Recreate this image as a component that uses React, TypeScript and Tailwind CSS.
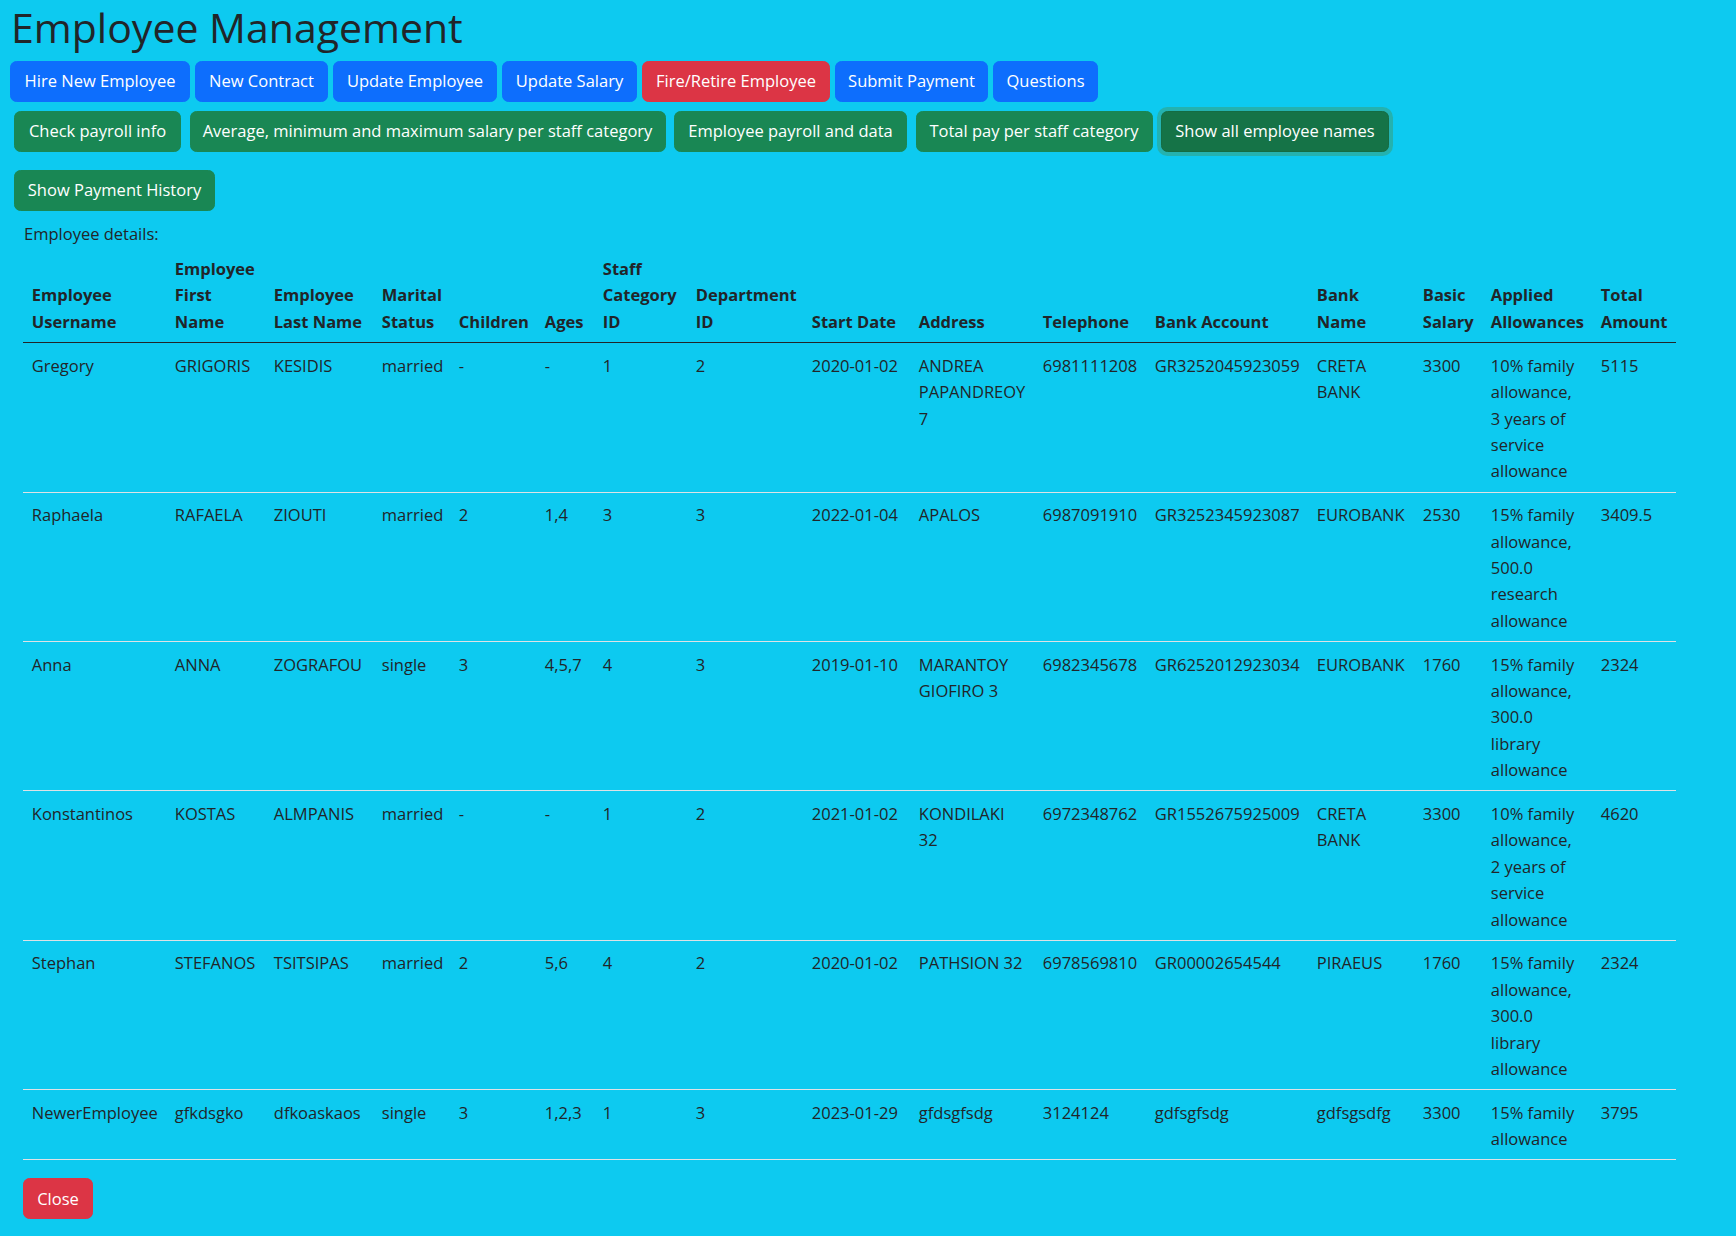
import React from "react";

type Row = {
  u: string;
  f: string;
  l: string;
  m: string;
  c: string;
  a: string;
  s: string;
  d: string;
  date: string;
  addr: string[];
  tel: string;
  acc: string;
  bank: string[];
  sal: string;
  allow: string[];
  tot: string;
};

const rows: Row[] = [
  {
    u: "Gregory", f: "GRIGORIS", l: "KESIDIS", m: "married", c: "-", a: "-", s: "1", d: "2",
    date: "2020-01-02", addr: ["ANDREA", "PAPANDREOY", "7"], tel: "6981111208", acc: "GR3252045923059",
    bank: ["CRETA", "BANK"], sal: "3300",
    allow: ["10% family", "allowance,", "3 years of", "service", "allowance"], tot: "5115",
  },
  {
    u: "Raphaela", f: "RAFAELA", l: "ZIOUTI", m: "married", c: "2", a: "1,4", s: "3", d: "3",
    date: "2022-01-04", addr: ["APALOS"], tel: "6987091910", acc: "GR3252345923087",
    bank: ["EUROBANK"], sal: "2530",
    allow: ["15% family", "allowance,", "500.0", "research", "allowance"], tot: "3409.5",
  },
  {
    u: "Anna", f: "ANNA", l: "ZOGRAFOU", m: "single", c: "3", a: "4,5,7", s: "4", d: "3",
    date: "2019-01-10", addr: ["MARANTOY", "GIOFIRO 3"], tel: "6982345678", acc: "GR6252012923034",
    bank: ["EUROBANK"], sal: "1760",
    allow: ["15% family", "allowance,", "300.0", "library", "allowance"], tot: "2324",
  },
  {
    u: "Konstantinos", f: "KOSTAS", l: "ALMPANIS", m: "married", c: "-", a: "-", s: "1", d: "2",
    date: "2021-01-02", addr: ["KONDILAKI", "32"], tel: "6972348762", acc: "GR1552675925009",
    bank: ["CRETA", "BANK"], sal: "3300",
    allow: ["10% family", "allowance,", "2 years of", "service", "allowance"], tot: "4620",
  },
  {
    u: "Stephan", f: "STEFANOS", l: "TSITSIPAS", m: "married", c: "2", a: "5,6", s: "4", d: "2",
    date: "2020-01-02", addr: ["PATHSION 32"], tel: "6978569810", acc: "GR00002654544",
    bank: ["PIRAEUS"], sal: "1760",
    allow: ["15% family", "allowance,", "300.0", "library", "allowance"], tot: "2324",
  },
  {
    u: "NewerEmployee", f: "gfkdsgko", l: "dfkoaskaos", m: "single", c: "3", a: "1,2,3", s: "1", d: "3",
    date: "2023-01-29", addr: ["gfdsgfsdg"], tel: "3124124", acc: "gdfsgfsdg",
    bank: ["gdfsgsdfg"], sal: "3300",
    allow: ["15% family", "allowance"], tot: "3795",
  },
];

const headers: string[][] = [
  ["Employee", "Username"],
  ["Employee", "First", "Name"],
  ["Employee", "Last Name"],
  ["Marital", "Status"],
  ["Children"],
  ["Ages"],
  ["Staff", "Category", "ID"],
  ["Department", "ID"],
  ["Start Date"],
  ["Address"],
  ["Telephone"],
  ["Bank Account"],
  ["Bank", "Name"],
  ["Basic", "Salary"],
  ["Applied", "Allowances"],
  ["Total", "Amount"],
];

function Lines({ lines }: { lines: string[] }) {
  return (
    <>
      {lines.map((t, i) => (
        <div key={i} className="whitespace-nowrap">
          {t}
        </div>
      ))}
    </>
  );
}

function Btn({ label, cls }: { label: string; cls: string }) {
  return (
    <button
      type="button"
      className={
        "inline-flex h-[41px] shrink-0 items-center justify-center whitespace-nowrap rounded-[6.5px] border text-[16.5px] leading-[26.4px] text-white " +
        cls
      }
    >
      {label}
    </button>
  );
}

export default function App() {
  return (
    <div
      className="min-h-screen w-full bg-[#0dcaf0] pl-[10px] text-[16.5px] leading-[26.4px] text-[#212529]"
      style={{ fontFamily: '"Open Sans", "Noto Sans", sans-serif' }}
    >
      <h1 className="m-0 pt-[2px] pl-[1px] text-[41px] font-normal leading-[51px]">Employee Management</h1>

      <div className="mt-[8px] flex gap-[5px]">
        <Btn label="Hire New Employee" cls="w-[180px] border-[#0d6efd] bg-[#0d6efd]" />
        <Btn label="New Contract" cls="w-[133px] border-[#0d6efd] bg-[#0d6efd]" />
        <Btn label="Update Employee" cls="w-[164px] border-[#0d6efd] bg-[#0d6efd]" />
        <Btn label="Update Salary" cls="w-[135px] border-[#0d6efd] bg-[#0d6efd]" />
        <Btn label="Fire/Retire Employee" cls="w-[188px] border-[#dc3545] bg-[#dc3545]" />
        <Btn label="Submit Payment" cls="w-[153px] border-[#0d6efd] bg-[#0d6efd]" />
        <Btn label="Questions" cls="w-[105px] border-[#0d6efd] bg-[#0d6efd]" />
      </div>

      <div className="mt-[9px] ml-[4px] flex gap-[8.5px]">
        <Btn label="Check payroll info" cls="w-[167px] border-[#198754] bg-[#198754]" />
        <Btn label="Average, minimum and maximum salary per staff category" cls="w-[476px] border-[#198754] bg-[#198754]" />
        <Btn label="Employee payroll and data" cls="w-[233px] border-[#198754] bg-[#198754]" />
        <Btn label="Total pay per staff category" cls="w-[237px] border-[#198754] bg-[#198754]" />
        <Btn
          label="Show all employee names"
          cls="w-[228px] border-[#146c43] bg-[#157347] shadow-[0_0_0_4px_rgba(60,153,110,0.5)]"
        />
      </div>

      <div className="mt-[18px] ml-[4px] flex">
        <Btn label="Show Payment History" cls="w-[201px] border-[#198754] bg-[#198754]" />
      </div>

      <div className="ml-[13px]">
        <div className="mt-[9.5px] pl-[1px]">Employee details:</div>

        <table className="w-[1653px] table-fixed border-collapse">
          <colgroup>
            <col className="w-[143px]" />
            <col className="w-[99px]" />
            <col className="w-[108px]" />
            <col className="w-[77px]" />
            <col className="w-[86px]" />
            <col className="w-[58px]" />
            <col className="w-[93px]" />
            <col className="w-[116px]" />
            <col className="w-[107px]" />
            <col className="w-[124px]" />
            <col className="w-[112px]" />
            <col className="w-[162px]" />
            <col className="w-[106px]" />
            <col className="w-[68px]" />
            <col className="w-[110px]" />
            <col className="w-[84px]" />
          </colgroup>
          <thead>
            <tr>
              {headers.map((h, i) => (
                <th
                  key={i}
                  className="border-b border-[#212529] px-[8.8px] pt-[9px] pb-[7px] text-left align-bottom font-bold"
                >
                  <Lines lines={h} />
                </th>
              ))}
            </tr>
          </thead>
          <tbody>
            {rows.map((r, i) => {
              const cells: string[][] = [
                [r.u], [r.f], [r.l], [r.m], [r.c], [r.a], [r.s], [r.d], [r.date],
                r.addr, [r.tel], [r.acc], r.bank, [r.sal], r.allow, [r.tot],
              ];
              return (
                <tr key={i}>
                  {cells.map((c, j) => (
                    <td
                      key={j}
                      className="border-b border-[#dee2e6] px-[8.8px] pt-[9.6px] pb-[6.8px] align-top"
                    >
                      <Lines lines={c} />
                    </td>
                  ))}
                </tr>
              );
            })}
          </tbody>
        </table>

        <div className="mt-[18px] flex pb-[18px]">
          <Btn label="Close" cls="w-[70px] border-[#dc3545] bg-[#dc3545]" />
        </div>
      </div>
    </div>
  );
}
